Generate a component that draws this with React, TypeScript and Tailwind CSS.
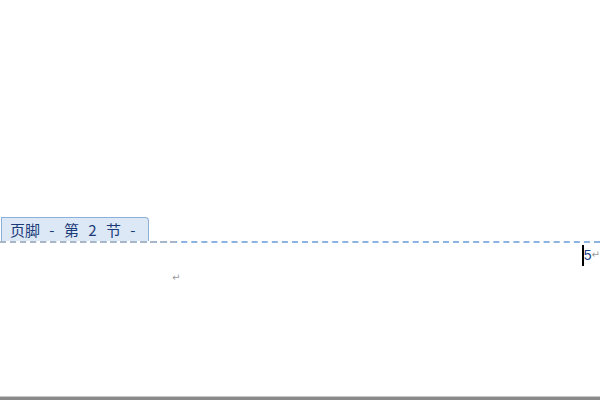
export default function App() {
  return (
    <div className="relative flex h-[400px] w-[600px] flex-col overflow-hidden bg-white font-['Noto_Sans_CJK_SC',sans-serif]">
      <div className="h-[217px]" />
      <div className="flex h-[24px] items-end">
        <div className="ml-[1px] flex h-[24px] w-[148px] items-center rounded-tr-[4px] border border-b-0 border-[#8eafd8] bg-[#dce8f6] pl-[8px] text-[15px] leading-none [word-spacing:6px] text-[#1a3a78] font-['Noto_Sans_CJK_SC','Liberation_Sans',sans-serif] whitespace-pre">
          页脚 - 第 2 节 -
        </div>
      </div>
      <div className="relative h-[2px] w-full border-t-[2px] border-dashed border-[#8db3e2]">
        <div className="absolute left-0 top-[-2px] h-[2px] w-[176px] border-t-[2px] border-dashed border-[#a9b6c8]" />
      </div>
      <div className="flex h-[24px] justify-end pr-[0px]">
        <div className="mt-[2px] flex items-start">
          <div className="h-[21px] w-[2px] bg-black" />
          <span className="mt-[3px] text-[14px] leading-none text-[#1e3f8a] font-['Liberation_Sans',sans-serif]">5</span>
          <span className="mt-[5px] text-[10px] leading-none text-[#9a9a9a] font-['DejaVu_Sans',sans-serif]">↵</span>
        </div>
      </div>
      <div className="pl-[172px] pt-[6px] text-[10px] leading-none text-[#9a9a9a] font-['DejaVu_Sans',sans-serif]">↵</div>
      <div className="flex-1" />
      <div className="h-[1px] bg-[#c8c8c8]" />
      <div className="h-[3px] bg-[#8a8a8a]" />
    </div>
  )
}
